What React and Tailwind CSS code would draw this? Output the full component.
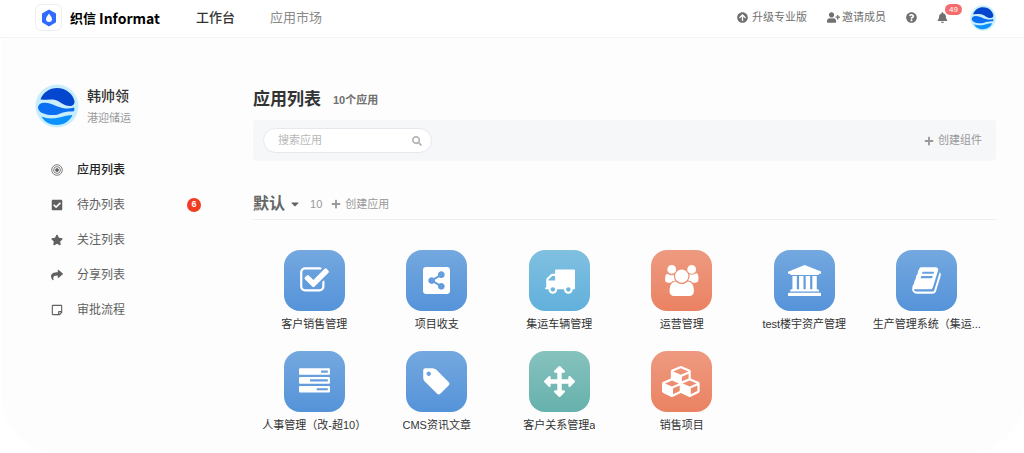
import {
  FaArrowCircleUp,
  FaBell,
  FaCaretDown,
  FaCheckSquare,
  FaPlus,
  FaQuestionCircle,
  FaRegStickyNote,
  FaSearch,
  FaShare,
  FaShareAltSquare,
  FaStar,
  FaUserPlus,
} from "react-icons/fa";

const TONES = {
  blue: "from-[#74a8df] to-[#5593d9]",
  sky: "from-[#80c0e0] to-[#61b0dc]",
  orange: "from-[#ee9a80] to-[#ea8262]",
  teal: "from-[#86c2be] to-[#66b1ac]",
};

function Glyph({ d, width = 1792 }) {
  return (
    <svg viewBox={`0 0 ${width} 1792`} className="h-[31px]" fill="currentColor" aria-hidden="true">
      <path d={d} />
    </svg>
  );
}

const CHECK =
  "M1472 930v318q0 119-84.5 203.5t-203.5 84.5h-832q-119 0-203.5-84.5t-84.5-203.5v-832q0-119 84.5-203.5t203.5-84.5h832q63 0 117 25 15 7 18 23 3 17-9 29l-49 49q-10 10-23 10-3 0-9-2-23-6-45-6h-832q-66 0-113 47t-47 113v832q0 66 47 113t113 47h832q66 0 113-47t47-113v-254q0-13 9-22l64-64q10-10 23-10 6 0 12 3 20 8 20 29zm231-489l-814 814q-24 24-57 24t-57-24l-430-430q-24-24-24-57t24-57l110-110q24-24 57-24t57 24l263 263 647-647q24-24 57-24t57 24l110 110q24 24 24 57t-24 57z";
const TRUCK =
  "M640 1408q0-52-38-90t-90-38-90 38-38 90 38 90 90 38 90-38 38-90zm-384-512h384v-256h-158q-13 0-22 9l-195 195q-9 9-9 22v30zm1280 512q0-52-38-90t-90-38-90 38-38 90 38 90 90 38 90-38 38-90zm256-1088v1024q0 15-4 26.5t-13.5 18.5-16.5 11.5-23.5 6-22.5 2-25.5 0-22.5-.5q0 106-75 181t-181 75-181-75-75-181h-384q0 106-75 181t-181 75-181-75-75-181h-64q-3 0-22.5.5t-25.5 0-22.5-2-23.5-6-16.5-11.5-13.5-18.5-4-26.5q0-26 19-45t45-19v-320q0-8-.5-35t0-38 2.5-34.5 6.5-37 14-30.5 22.5-30l198-198q19-19 50.5-32t58.5-13h160v-192q0-26 19-45t45-19h1024q26 0 45 19t19 45z";
const GROUP =
  "M657 896q-162 5-265 128h-134q-82 0-138-40.5t-56-118.5q0-353 124-353 6 0 43.5 21t97.5 42.5 119 21.5q67 0 133-23-5 37-5 66 0 159 93 293zm1071 637q0 120-73 189.5t-194 69.5h-874q-121 0-194-69.5t-73-189.5q0-53 3.5-103.5t14-109 26.5-108.5 43-97.5 62-81 85.5-53.5 111.5-20q10 0 43 21.5t73 48 107 48 135 21.5 135-21.5 107-48 73-48 43-21.5q61 0 111.5 20t85.5 53.5 62 81 43 97.5 26.5 108.5 14 109 3.5 103.5zm-1024-1277q0 106-75 181t-181 75-181-75-75-181 75-181 181-75 181 75 75 181zm704 384q0 159-112.5 271.5t-271.5 112.5-271.5-112.5-112.5-271.5 112.5-271.5 271.5-112.5 271.5 112.5 112.5 271.5zm576 225q0 78-56 118.5t-138 40.5h-134q-103-123-265-128 93-134 93-293 0-29-5-66 66 23 133 23 59 0 119-21.5t97.5-42.5 43.5-21q124 0 124 353zm-128-609q0 106-75 181t-181 75-181-75-75-181 75-181 181-75 181 75 75 181z";
const BANK =
  "M960 0l960 384v128h-128q0 26-20.5 45t-48.5 19h-1526q-28 0-48.5-19t-20.5-45h-128v-128zm-704 640h256v768h128v-768h256v768h128v-768h256v768h128v-768h256v768h59q28 0 48.5 19t20.5 45v64h-1664v-64q0-26 20.5-45t48.5-19h59v-768zm1595 960q28 0 48.5 19t20.5 45v128h-1920v-128q0-26 20.5-45t48.5-19h1782z";
const BOOK =
  "M1703 478q40 57 18 129l-275 906q-19 64-76.5 107.5t-122.5 43.5h-923q-77 0-148.5-53.5t-99.5-131.5q-24-67-2-127 0-4 3-27t4-37q1-8-3-21.5t-3-19.5q2-11 8-21t16.5-23.5 16.5-23.5q23-38 45-91.5t30-91.5q3-10 .5-30t-.5-28q3-11 17-28t17-23q21-36 42-92t25-90q1-9-2.5-32t.5-28q4-13 22-30.5t22-22.5q19-26 42.5-84.5t27.5-96.5q1-8-3-25.5t-2-26.5q2-8 9-18t18-23 17-21q8-12 16.5-30.5t15-35 16-36 19.5-32 26.5-23.5 36-11.5 47.5 5.5l-1 3q38-9 51-9h761q74 0 114 56t18 130l-274 906q-36 119-71.5 153.5t-128.5 34.5h-869q-27 0-38 15-11 16-1 43 24 70 144 70h923q29 0 56-15.5t35-41.5l300-987q7-22 5-57 38 15 59 43zm-1064 2q-4 13 2 22.5t20 9.5h608q13 0 25.5-9.5t16.5-22.5l21-64q4-13-2-22.5t-20-9.5h-608q-13 0-25.5 9.5t-16.5 22.5zm-83 256q-4 13 2 22.5t20 9.5h608q13 0 25.5-9.5t16.5-22.5l21-64q4-13-2-22.5t-20-9.5h-608q-13 0-25.5 9.5t-16.5 22.5z";
const TASKS =
  "M1024 1408h640v-128h-640v128zm-384-512h1024v-128h-1024v128zm640-512h384v-128h-384v128zm512 832v256q0 26-19 45t-45 19h-1664q-26 0-45-19t-19-45v-256q0-26 19-45t45-19h1664q26 0 45 19t19 45zm0-512v256q0 26-19 45t-45 19h-1664q-26 0-45-19t-19-45v-256q0-26 19-45t45-19h1664q26 0 45 19t19 45zm0-512v256q0 26-19 45t-45 19h-1664q-26 0-45-19t-19-45v-256q0-26 19-45t45-19h1664q26 0 45 19t19 45z";
const TAG =
  "M576 448q0-53-37.5-90.5t-90.5-37.5-90.5 37.5-37.5 90.5 37.5 90.5 90.5 37.5 90.5-37.5 37.5-90.5zm1067 576q0 53-37 90l-491 492q-39 37-91 37-53 0-90-37l-715-716q-38-37-64.5-101t-26.5-117v-416q0-52 38-90t90-38h416q53 0 117 26.5t102 64.5l715 714q37 39 37 91z";
const ARROWS =
  "M1792 896q0 26-19 45l-256 256q-19 19-45 19t-45-19-19-45v-128h-384v384h128q26 0 45 19t19 45-19 45l-256 256q-19 19-45 19t-45-19l-256-256q-19-19-19-45t19-45 45-19h128v-384h-384v128q0 26-19 45t-45 19-45-19l-256-256q-19-19-19-45t19-45l256-256q19-19 45-19t45 19 19 45v128h384v-384h-128q-26 0-45-19t-19-45 19-45l256-256q19-19 45-19t45 19l256 256q19 19 19 45t-19 45-45 19h-128v384h384v-128q0-26 19-45t45-19 45 19l256 256q19 19 19 45z";
const CUBES =
  "M640 1632l384-192v-314l-384 164v342zm-64-454l404-173-404-173-404 173zm1088 454l384-192v-314l-384 164v342zm-64-454l404-173-404-173-404 173zm-448-293l384-165v-266l-384 164v267zm-64-379l441-189-441-189-441 189zm1088 518v416q0 36-19 67t-52 47l-448 224q-25 14-57 14t-57-14l-448-224q-5-2-7-4-2 2-7 4l-448 224q-25 14-57 14t-57-14l-448-224q-33-16-52-47t-19-67v-416q0-38 21.5-70t56.5-48l434-186v-400q0-38 21.5-70t56.5-48l448-192q23-10 50-10t50 10l448 192q35 16 56.5 48t21.5 70v400l434 186q36 16 57 48t21 70z";

const APPS = [
  { name: "客户销售管理", tone: "blue", icon: <Glyph d={CHECK} /> },
  { name: "项目收支", tone: "blue", icon: <FaShareAltSquare className="h-[31px] w-[27px]" /> },
  { name: "集运车辆管理", tone: "sky", icon: <Glyph d={TRUCK} /> },
  { name: "运营管理", tone: "orange", icon: <Glyph d={GROUP} width={2048} /> },
  { name: "test楼宇资产管理", tone: "blue", icon: <Glyph d={BANK} width={1920} /> },
  { name: "生产管理系统（集运...", tone: "blue", icon: <Glyph d={BOOK} /> },
  { name: "人事管理（改-超10）", tone: "blue", icon: <Glyph d={TASKS} /> },
  { name: "CMS资讯文章", tone: "blue", icon: <Glyph d={TAG} /> },
  { name: "客户关系管理a", tone: "teal", icon: <Glyph d={ARROWS} /> },
  { name: "销售项目", tone: "orange", icon: <Glyph d={CUBES} width={2304} /> },
];

function TargetIcon() {
  return (
    <svg viewBox="0 0 12 12" className="size-3" fill="none" stroke="currentColor" strokeWidth="0.8" aria-hidden="true">
      <circle cx="6" cy="6" r="5.3" />
      <circle cx="6" cy="6" r="3.4" />
      <circle cx="6" cy="6" r="1.5" fill="currentColor" />
    </svg>
  );
}

const MENU = [
  { name: "应用列表", icon: <TargetIcon />, active: true },
  { name: "待办列表", icon: <FaCheckSquare />, count: 6 },
  { name: "关注列表", icon: <FaStar /> },
  { name: "分享列表", icon: <FaShare /> },
  { name: "审批流程", icon: <FaRegStickyNote /> },
];

function Avatar({ className }) {
  return (
    <svg viewBox="0 0 44 44" className={className} role="img" aria-label="韩帅领">
      <circle cx="22" cy="22" r="21.5" fill="#c9eefb" />
      <path d="M5.400 15.600C8 8.500 14.500 4 22 4c9 0 16 6 17.500 13 .3 3-1.500 5-4.500 5-8 0-10-6-17-6.500-4-.4-8 .5-12.600.1z" fill="#0546cf" />
      <path d="M3 23c.5-3 3.500-4.500 7-4.300 7 .3 11 4 18.500 5.500 4 .7 7.500.2 10.500-.7.6 1.500.4 2.500 0 3.800-4 .3-7.500.2-11 1.200-3 .9-5 2.300-8 2.500-5 .4-10-.5-14-2.500C4 27 3 25 3 23z" fill="#0a6ff0" />
      <path d="M6.500 32.500c4 1.600 8 2.300 13.500 1.800 6-.6 11-3.500 17.500-3.300C35 37 29 41 22 41S9 37.500 6.500 32.500z" fill="#0b92ff" />
    </svg>
  );
}

function Logo() {
  return (
    <a href="#" className="flex items-center gap-2 text-black">
      <span className="flex size-[27px] items-center justify-center rounded-md border border-[#eeeeee] bg-white">
        <svg viewBox="0 0 16 18" className="h-[18px] w-4" aria-hidden="true">
          <path
            d="M8 1.400l6.200 3.600v7.800L8 16.500l-6.200-3.700V5z"
            fill="#2f6bff"
            stroke="#2f6bff"
            strokeWidth="1.6"
            strokeLinejoin="round"
          />
          <path d="M8 4.600c1.200 2 3 3.700 3 5.500a3 3 0 0 1-6 0C5 8.300 6.800 6.600 8 4.600z" fill="#fff" />
        </svg>
      </span>
      <span className="flex items-center gap-[3px] font-['Noto_Sans_CJK_SC',sans-serif] leading-6 font-bold">
        <span className="text-[13px]">织信</span>
        <span className="text-[14px]">Informat</span>
      </span>
    </a>
  );
}

function Header() {
  return (
    <header className="flex h-[38px] items-center justify-between border-b border-[#f3f3f3] bg-white pr-7 pb-0.5 pl-[35px]">
      <div className="flex items-center">
        <Logo />
        <nav className="ml-9 flex gap-[35px] text-[13px]">
          <a href="#" className="font-medium text-[#333333]">工作台</a>
          <a href="#" className="text-[#8a8a8a]">应用市场</a>
        </nav>
      </div>
      <div className="flex items-center text-[11px] text-[#707070]">
        <button type="button" className="flex items-center gap-1">
          <FaArrowCircleUp />
          升级专业版
        </button>
        <button type="button" className="ml-5 flex items-center gap-0.5">
          <FaUserPlus className="size-[13px]" />
          邀请成员
        </button>
        <button type="button" aria-label="帮助" className="ml-5">
          <FaQuestionCircle />
        </button>
        <button type="button" aria-label="通知" className="relative ml-5">
          <FaBell />
          <span className="absolute -top-2 left-2 flex h-[11px] items-center rounded-full bg-[#f56c6c] px-1 text-[8px] text-white">
            49
          </span>
        </button>
        <button type="button" className="ml-[22px]">
          <Avatar className="size-[26px]" />
        </button>
      </div>
    </header>
  );
}

function Sidebar() {
  return (
    <aside className="w-[251px] shrink-0 pt-[46px] pl-[33px]">
      <div className="flex items-center gap-2">
        <Avatar className="size-11" />
        <div>
          <div className="text-[14px] leading-6 font-medium text-[#333333]">韩帅领</div>
          <div className="text-[11px] leading-5 text-[#9a9a9a]">港迎储运</div>
        </div>
      </div>
      <ul className="mt-6 pr-[52px] pl-4 text-[12px] text-[#606060]">
        {MENU.map((item) => (
          <li key={item.name}>
            <a href="#" className="flex h-[35px] items-center">
              {item.icon}
              <span className={item.active ? "ml-[14px] font-medium text-[#222222]" : "ml-[14px]"}>{item.name}</span>
              {item.count && (
                <span className="ml-auto flex size-[14px] items-center justify-center rounded-full bg-[#f23c22] text-[9px] font-bold text-white">
                  {item.count}
                </span>
              )}
            </a>
          </li>
        ))}
      </ul>
    </aside>
  );
}

function AppTile({ app }) {
  return (
    <a href="#" className="flex min-w-0 flex-col items-center px-1">
      <span className={`flex size-[61px] items-center justify-center rounded-2xl bg-linear-to-b text-white ${TONES[app.tone]}`}>
        {app.icon}
      </span>
      <span className="max-w-full truncate text-[11px] leading-[26px] text-[#333333]">{app.name}</span>
    </a>
  );
}

export default function App() {
  return (
    <div className="min-h-screen bg-white font-['Liberation_Sans','Noto_Sans_CJK_SC',sans-serif]">
      <Header />
      <div className="ml-0.5 flex min-h-[415px] rounded-b-[56px] bg-[#fdfdfd]">
        <Sidebar />
        <main className="min-w-0 flex-1 pt-12 pr-7 pb-3">
          <div className="flex h-7 items-center gap-3">
            <h1 className="text-[17px] font-bold text-[#333333]">应用列表</h1>
            <span className="text-[11px] font-bold text-[#707070]">10个应用</span>
          </div>
          <div className="mt-[6px] flex h-[41px] items-center justify-between rounded bg-[#f6f7f9] pr-[14px] pl-[10px]">
            <div className="flex h-[25px] w-[169px] items-center rounded-full border border-[#e6e8ee] bg-white pr-[9px] pl-[14px] text-[11px]">
              <input
                type="text"
                aria-label="搜索应用"
                placeholder="搜索应用"
                className="min-w-0 flex-1 outline-none placeholder:text-[#b8b8b8]"
              />
              <FaSearch className="size-[10px] text-[#b0b0b0]" />
            </div>
            <button type="button" className="flex items-center gap-1 text-[11px] text-[#999999]">
              <FaPlus className="size-[10px]" />
              创建组件
            </button>
          </div>
          <section className="mt-7">
            <div className="flex h-[31px] items-center border-b border-[#efefef] text-[11px] text-[#999999]">
              <h2 className="text-[16px] font-bold text-[#666666]">默认</h2>
              <button type="button" aria-label="展开分组" className="ml-1 text-[#606060]">
                <FaCaretDown className="size-3" />
              </button>
              <span className="ml-[9px]">10</span>
              <button type="button" className="ml-[9px] flex items-center gap-1">
                <FaPlus className="size-[10px]" />
                创建应用
              </button>
            </div>
            <div className="mt-[30px] grid grid-cols-6 gap-y-[14px] pr-2">
              {APPS.map((app) => (
                <AppTile key={app.name} app={app} />
              ))}
            </div>
          </section>
        </main>
      </div>
    </div>
  );
}
